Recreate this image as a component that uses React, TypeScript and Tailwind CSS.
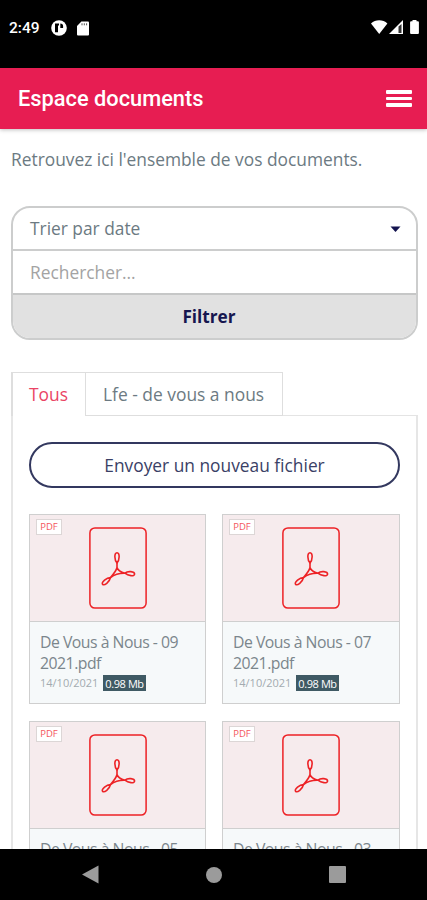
type Doc = {
  name: string;
  date: string;
  size: string;
};

const DOCUMENTS: Doc[] = [
  { name: "De Vous à Nous - 09 2021.pdf", date: "14/10/2021", size: "0.98 Mb" },
  { name: "De Vous à Nous - 07 2021.pdf", date: "14/10/2021", size: "0.98 Mb" },
  { name: "De Vous à Nous - 05 2021.pdf", date: "14/10/2021", size: "0.98 Mb" },
  { name: "De Vous à Nous - 03 2021.pdf", date: "14/10/2021", size: "0.98 Mb" },
];

function StatusBar() {
  return (
    <div className="flex h-[68px] shrink-0 items-start justify-between bg-black pl-[9px] pr-[7px] pt-[18px] text-white">
      <div className="flex items-center">
        <span className="w-[31px] whitespace-nowrap font-[Roboto,sans-serif] text-[15.5px] leading-[20px] font-medium">2:49</span>
        <svg className="ml-[11px] h-4 w-4" viewBox="0 0 16 16">
          <circle cx="8" cy="8" r="7.8" fill="#fff" />
          <path d="M4 3.6h4v1.8H7v6.8H4z" fill="#000" />
          <path d="M9.3 3.6a2.8 2.8 0 0 1 2.8 2.8v1.6H9.3z" fill="#000" />
        </svg>
        <svg className="ml-2.5 h-[15px] w-3" viewBox="0 0 12 15">
          <path d="M4.4.6H11a1 1 0 0 1 1 1v11.9a1 1 0 0 1-1 1H1a1 1 0 0 1-1-1V5z" fill="#fff" />
          <path d="M5 2.3v2M7.3 2.3v2M9.6 2.3v2" stroke="#555" strokeWidth="1" />
        </svg>
      </div>
      <svg className="mt-[1px] h-4 w-[50px]" viewBox="0 0 50 16">
        <path d="M1 4.6C5.4.2 13 .2 17.4 4.6L9.2 15z" fill="#fff" />
        <path d="M33 1v14H19z" fill="#fff" />
        <path d="M28.5 7.6 31.5 5v9h-3z" fill="#333" />
        <path d="M42.5 1h4v1.3h1.4a1 1 0 0 1 1 1V14a1 1 0 0 1-1 1h-6.800a1 1 0 0 1-1-1V3.300a1 1 0 0 1 1-1h1.400z" fill="#fff" />
      </svg>
    </div>
  );
}

function PdfIcon() {
  return (
    <svg className="h-[82px] w-[58px]" viewBox="0 0 58 82" fill="none" stroke="#ed2226">
      <rect x="0.9" y="0.9" width="56.2" height="80.2" rx="5" strokeWidth="1.5" />
      <g strokeWidth="1.6" strokeLinejoin="round">
        <path d="M28 36C25.3 33 25 25.800 28 25.800C31 25.800 30.700 33 28 36Z" />
        <path d="M36 46.200C39 43.500 45.500 44.500 45.600 47C45.600 49.800 39 48.800 36 46.200Z" />
        <path d="M21.500 50.500C17.500 50.800 12.300 55 13.500 57.200C15.200 59.200 20.500 55 21.500 50.500Z" />
        <path d="M28 36V40.500C27.600 42.500 25.500 46 21.500 50.500C25.500 47.500 31 46 36 46.200C31.500 45 28.600 42.500 28 40.500Z" />
      </g>
    </svg>
  );
}

function DocumentCard({ doc }: { doc: Doc }) {
  return (
    <article className="h-[190px] border border-[#cfcfcf] bg-[#f6f9fa]">
      <div className="relative flex h-[107px] justify-center border-b border-[#cfcfcf] bg-[#f6ebed] pt-[12px]">
        <span className="absolute left-[6px] top-[4px] flex h-4 w-[26px] items-center justify-center border border-[#dcd6d6] bg-white text-[9.5px] leading-none text-[#f4565c]">
          PDF
        </span>
        <PdfIcon />
      </div>
      <div className="pl-[10px] pt-[10px] text-[#7b868c]">
        <h3 className="w-[150px] text-[15.8px] leading-[21px] tracking-[-0.5px]">{doc.name}</h3>
        <div className="mt-[1px] flex items-center">
          <span className="w-[63px] whitespace-nowrap text-[11px] leading-4 text-[#a3abb0]">{doc.date}</span>
          <span className="flex h-4 w-[43px] items-center justify-center whitespace-nowrap bg-[#3f5a64] text-[11px] leading-none font-medium tracking-[-0.4px] text-white">
            {doc.size}
          </span>
        </div>
      </div>
    </article>
  );
}

function NavBar() {
  return (
    <nav className="flex h-[51px] shrink-0 items-center justify-center gap-[107px] bg-black">
      <svg className="h-[19px] w-[17px]" viewBox="0 0 17 19">
        <path d="M16.5.5v18L0 9.5z" fill="#9b9b9b" />
      </svg>
      <span className="size-4 rounded-full bg-[#9b9b9b]" />
      <span className="size-[17px] rounded-[1px] bg-[#9b9b9b]" />
    </nav>
  );
}

export default function App() {
  return (
    <div className="flex h-[900px] w-[427px] flex-col overflow-hidden bg-white font-['Open_Sans',sans-serif] text-[#6c7a82]">
      <StatusBar />
      <header className="z-10 flex h-[61px] shrink-0 items-center justify-between bg-[#e71d52] pl-[18px] pr-[15px] shadow-[0_1px_4px_rgba(0,0,0,0.25)]">
        <h1 className="pt-[1px] font-[Roboto,sans-serif] text-[21.8px] font-medium text-white">Espace documents</h1>
        <button type="button" aria-label="Menu" className="flex w-[26px] flex-col gap-[3px]">
          <span className="h-[3.5px] rounded-[1px] bg-white" />
          <span className="h-[3.5px] rounded-[1px] bg-white" />
          <span className="h-[3.5px] rounded-[1px] bg-white" />
        </button>
      </header>

      <main className="min-h-0 flex-1 overflow-hidden pl-[11px] pr-[9px]">
        <p className="pt-[18px] text-[17.35px] leading-6 whitespace-nowrap">Retrouvez ici l'ensemble de vos documents.</p>

        <form className="mt-[35px] flex h-[134px] w-[407px] flex-col overflow-hidden rounded-[19px] border-2 border-[#cccdcd]">
          <div className="flex h-[43px] items-center justify-between border-b-2 border-[#cccdcd] pl-[17px] pr-[15px] text-[17.35px]">
            <span>Trier par date</span>
            <svg className="h-[6px] w-[11px]" viewBox="0 0 11 6">
              <path d="M.5.5h10L5.5 6z" fill="#14144f" />
            </svg>
          </div>
          <input
            className="h-[44px] border-b-2 border-[#c6c7c7] pl-[17px] text-[17.35px] outline-none placeholder:text-[#a3a3a3]"
            placeholder="Rechercher..."
          />
          <button type="button" className="flex-1 bg-[#e1e1e1] pr-[11px] text-[17.2px] font-bold text-[#16164f]">
            Filtrer
          </button>
        </form>

        <div className="mt-[32px] flex h-[44px] w-[407px] text-[17.4px] leading-[42px]">
          <span className="w-[74px] border-l-2 border-t border-[#dedede] pl-[16px] text-[#ea4465]">Tous</span>
          <span className="w-[198px] border border-[#dedede] pl-[17px] whitespace-nowrap">Lfe - de vous a nous</span>
          <span className="flex-1 border-b border-[#e4e4e4]" />
        </div>
        <section className="h-[600px] w-[407px] border-x-2 border-[#e6e6e6] px-[16px] pt-[26px]">
          <button
            type="button"
            className="block h-[46px] w-[371px] rounded-full border-2 border-[#33385f] pt-[1px] text-[17.35px] text-[#3a3f66]"
          >
            Envoyer un nouveau fichier
          </button>
          <div className="mt-[26px] grid w-[371px] grid-cols-[177px_178px] gap-x-[16px] gap-y-[17px]">
            {DOCUMENTS.map((doc) => (
              <DocumentCard key={doc.name} doc={doc} />
            ))}
          </div>
        </section>
      </main>
      <NavBar />
    </div>
  );
}
